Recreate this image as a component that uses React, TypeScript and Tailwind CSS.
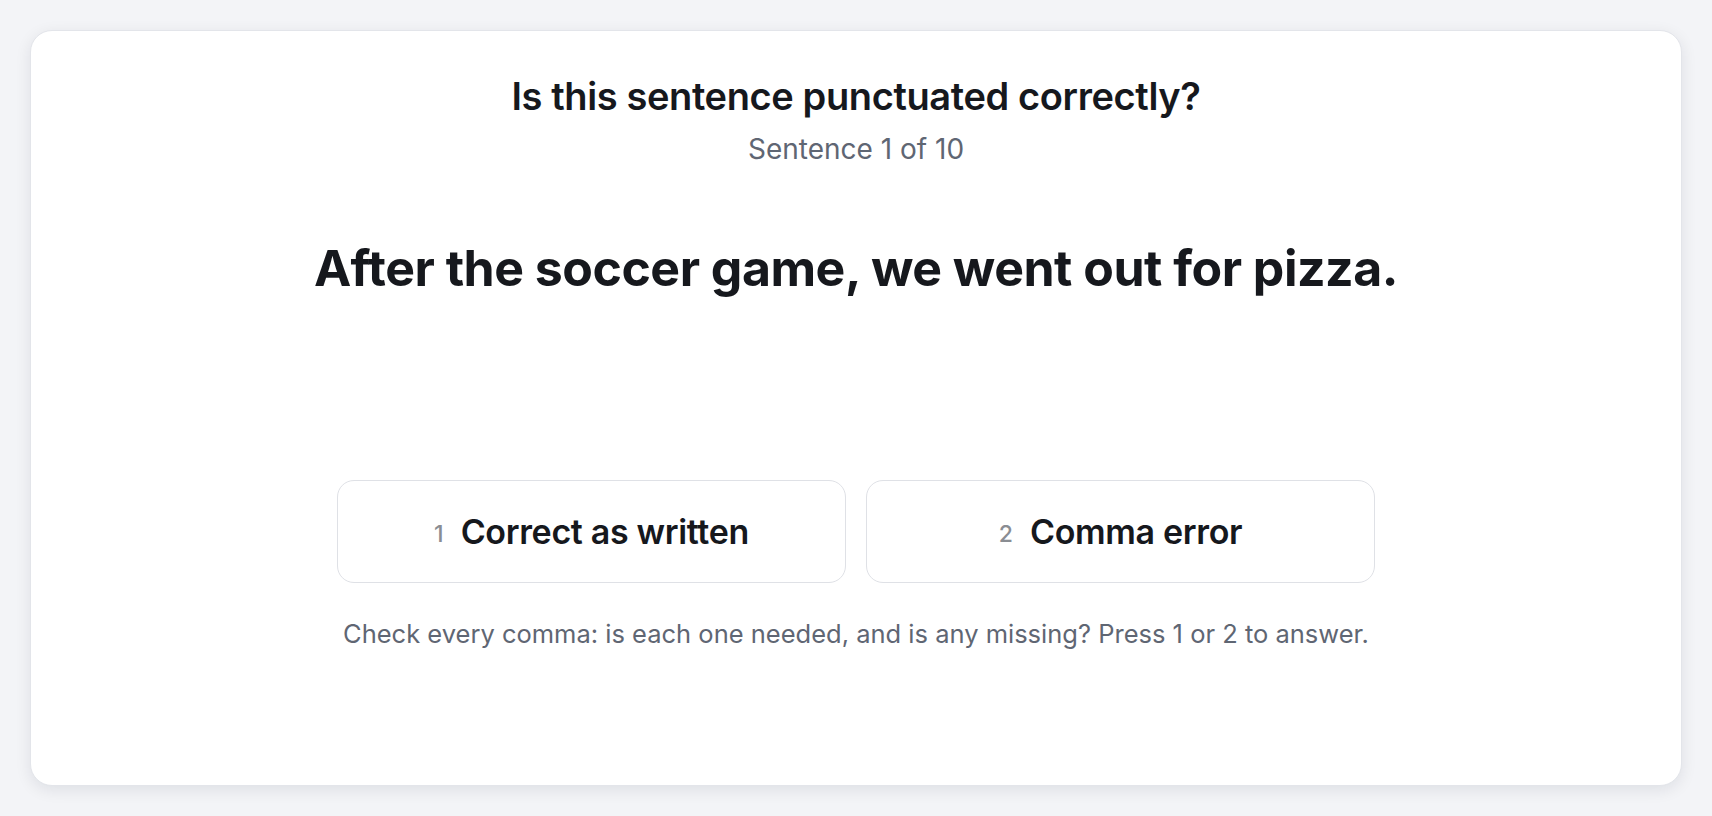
import { useEffect, useState } from "react"

const options = [
  { key: "1", label: "Correct as written" },
  { key: "2", label: "Comma error" },
]

export default function App() {
  const [picked, setPicked] = useState<string | null>(null)

  useEffect(() => {
    const onKey = (e: KeyboardEvent) => {
      if (e.key === "1" || e.key === "2") setPicked(e.key)
    }
    window.addEventListener("keydown", onKey)
    return () => window.removeEventListener("keydown", onKey)
  }, [])

  return (
    <div className="min-h-screen bg-[#f3f4f7] p-[30px] font-['Inter',sans-serif]">
      <div className="flex h-[756px] flex-col items-center rounded-[22px] border border-[#e3e5ea] bg-white pt-[42px] shadow-[0_4px_16px_rgba(15,23,42,0.09)]">
        <h1 className="text-[38px] leading-[46px] font-semibold tracking-[-0.01em] text-[#16181d]">
          Is this sentence punctuated correctly?
        </h1>
        <p className="mt-[13px] text-[28px] leading-[34px] text-[#5f6673]">Sentence 1 of 10</p>

        <p className="mt-[70px] text-[50px] leading-[64px] font-bold tracking-[-0.01em] text-[#16181d]">
          After the soccer game, we went out for pizza.
        </p>

        <div className="mt-[180px] flex gap-5">
          {options.map((o) => (
            <button
              key={o.key}
              onClick={() => setPicked(o.key)}
              className={`flex h-[103px] w-[509px] items-center justify-center gap-[17px] rounded-[17px] border bg-white ${picked === o.key ? "border-gray-400" : "border-[#dfe1e6]"}`}
            >
              <span className="pt-1.5 text-[23px] font-medium text-[#8a8d93]">{o.key}</span>
              <span className="text-[34px] font-semibold tracking-[-0.01em] text-[#16181d]">{o.label}</span>
            </button>
          ))}
        </div>

        <p className="mt-[35px] text-[25.5px] leading-8 text-[#5f6673]">
          Check every comma: is each one needed, and is any missing? Press 1 or 2 to answer.
        </p>
      </div>
    </div>
  )
}
